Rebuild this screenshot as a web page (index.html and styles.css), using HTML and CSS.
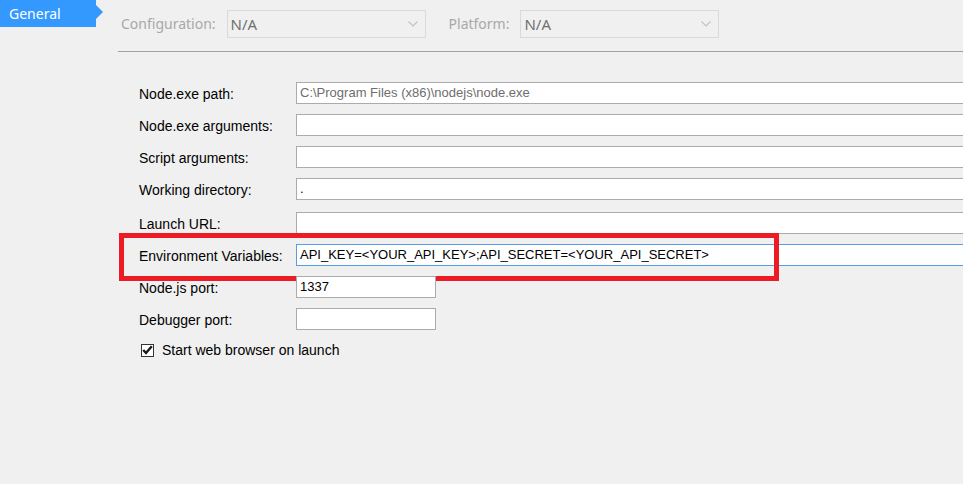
FILE: index.html
```html
<!DOCTYPE html>
<html>
<head>
<meta charset="utf-8">
<link rel="stylesheet" href="styles.css">
</head>
<body>
<div class="page">
  <nav class="sidebar">
    <div class="tab">General</div>
  </nav>
  <main class="content">
    <div class="toolbar">
      <span class="tb-label">Configuration:</span>
      <div class="select sel-config"><span>N/A</span>
        <svg class="chev" width="10" height="6" viewBox="0 0 10 6"><polyline points="0.5,0.5 5,5 9.5,0.5" fill="none" stroke="#c2c2c2" stroke-width="1.2"/></svg>
      </div>
      <span class="tb-label tb-platform">Platform:</span>
      <div class="select"><span>N/A</span>
        <svg class="chev" width="10" height="6" viewBox="0 0 10 6"><polyline points="0.5,0.5 5,5 9.5,0.5" fill="none" stroke="#c2c2c2" stroke-width="1.2"/></svg>
      </div>
    </div>
    <div class="props">
      <div class="row"><label>Node.exe path:</label><div class="input wide dim">C:\Program Files (x86)\nodejs\node.exe</div></div>
      <div class="row"><label>Node.exe arguments:</label><div class="input wide"></div></div>
      <div class="row"><label>Script arguments:</label><div class="input wide"></div></div>
      <div class="row"><label>Working directory:</label><div class="input wide">.</div></div>
      <div class="row row-gap"><label>Launch URL:</label><div class="input wide"></div></div>
      <div class="row env"><label>Environment Variables:</label><div class="input wide focus">API_KEY=&lt;YOUR_API_KEY&gt;;API_SECRET=&lt;YOUR_API_SECRET&gt;</div><div class="highlight"></div></div>
      <div class="row"><label>Node.js port:</label><div class="input short">1337</div></div>
      <div class="row"><label>Debugger port:</label><div class="input short"></div></div>
      <div class="check-row">
        <span class="checkbox"><svg width="11" height="10" viewBox="0 0 11 10"><polyline points="1.2,5 4,8 9.8,1.2" fill="none" stroke="#1a1a1a" stroke-width="2.4"/></svg></span>
        <span class="check-label">Start web browser on launch</span>
      </div>
    </div>
  </main>
</div>
</body>
</html>
```
FILE: styles.css
```css
html, body {
  margin: 0;
  padding: 0;
  background: #f0f0f0;
  overflow: hidden;
}
body {
  width: 963px;
  height: 484px;
}
.page {
  display: flex;
  height: 484px;
  overflow: hidden;
}
.sidebar {
  width: 118px;
  flex: none;
}
.tab {
  position: relative;
  width: 87px;
  height: 27px;
  padding-left: 9px;
  background: #3399ff;
  color: #ffffff;
  font-family: "Noto Sans", "Open Sans", sans-serif;
  font-size: 14px;
  line-height: 27px;
  box-sizing: content-box;
}
.tab::after {
  content: "";
  position: absolute;
  left: 96px;
  top: 5px;
  border-top: 7px solid transparent;
  border-bottom: 7px solid transparent;
  border-left: 7px solid #3399ff;
}
.content {
  flex: 1;
  min-width: 0;
  overflow: hidden;
}
.toolbar {
  height: 52px;
  box-sizing: border-box;
  border-bottom: 1px solid #a0a0a0;
  display: flex;
  align-items: flex-start;
  padding: 10px 0 0 3px;
  font-family: "Noto Sans", "Open Sans", sans-serif;
}
.tb-label {
  color: #a8a8a8;
  font-size: 14px;
  line-height: 28px;
  margin-right: 11px;
}
.tb-platform {
  margin-left: 23px;
  margin-right: 11px;
}
.select {
  width: 199px;
  height: 28px;
  box-sizing: border-box;
  border: 1px solid #d9d9d9;
  display: flex;
  align-items: center;
  justify-content: space-between;
  padding: 0 7px 0 3px;
  color: #707070;
  font-size: 15px;
}
.chev {
  display: block;
}
.props {
  padding: 30px 0 0 21px;
  display: flex;
  flex-direction: column;
  gap: 10px;
  font-family: "Liberation Sans", Arial, sans-serif;
  font-size: 14px;
  color: #000;
}
.row {
  display: flex;
  align-items: center;
  height: 22px;
  position: relative;
}
.row-gap {
  margin-top: 2px;
}
.row label {
  width: 157px;
  flex: none;
  padding-top: 2px;
}
.input {
  height: 22px;
  box-sizing: border-box;
  border: 1px solid #ababab;
  background: #ffffff;
  padding: 0 3px;
  font-size: 13px;
  line-height: 19px;
  white-space: nowrap;
  flex: none;
}
.wide {
  width: 720px;
}
.short {
  width: 140px;
}
.dim {
  color: #6d6d6d;
}
.focus {
  border-color: #569de5;
}
.highlight {
  position: absolute;
  left: -20px;
  top: -11px;
  width: 660px;
  height: 48px;
  box-sizing: border-box;
  border: 5px solid #ed1c24;
  pointer-events: none;
}
.check-row {
  display: flex;
  align-items: center;
  margin-top: 2px;
  padding-left: 2px;
}
.checkbox {
  width: 13px;
  height: 13px;
  box-sizing: border-box;
  border: 1px solid #333333;
  background: #ffffff;
  display: flex;
  align-items: center;
  justify-content: center;
  margin-right: 8px;
}
.checkbox svg {
  display: block;
}
```
